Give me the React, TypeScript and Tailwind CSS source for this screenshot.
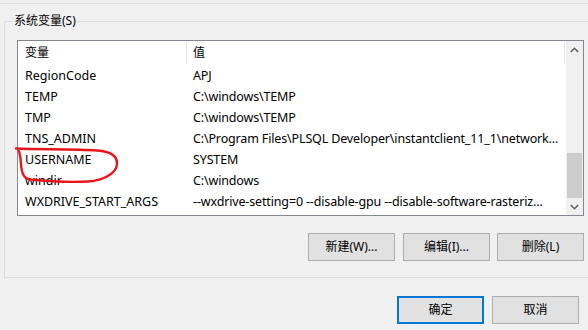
import React from "react";

interface EnvVar {
  name: string;
  value: string;
}

const rows: EnvVar[] = [
  { name: "RegionCode", value: "APJ" },
  { name: "TEMP", value: "C:\\windows\\TEMP" },
  { name: "TMP", value: "C:\\windows\\TEMP" },
  { name: "TNS_ADMIN", value: "C:\\Program Files\\PLSQL Developer\\instantclient_11_1\\network..." },
  { name: "USERNAME", value: "SYSTEM" },
  { name: "windir", value: "C:\\windows" },
  { name: "WXDRIVE_START_ARGS", value: "--wxdrive-setting=0 --disable-gpu --disable-software-rasteriz..." },
];

const Chevron = ({ down }: { down?: boolean }) => (
  <svg width="9" height="6" viewBox="0 0 9 6" className={down ? "rotate-180" : ""}>
    <path d="M0.8 5 L4.5 1.3 L8.2 5" fill="none" stroke="#606060" strokeWidth="1.6" />
  </svg>
);

const WinButton = ({ label, primary, className = "" }: { label: string; primary?: boolean; className?: string }) => (
  <button
    className={
      "w-[87px] h-[28px] bg-[#e1e1e1] flex items-center justify-center leading-none " +
      (primary ? "border-2 border-[#0078d7] " : "border border-[#adadad] ") +
      className
    }
  >
    {label}
  </button>
);

export default function App() {
  return (
    <div className="relative w-[588px] h-[330px] overflow-hidden bg-[#f0f0f0] text-[12px] text-black font-['Noto_Sans','Noto_Sans_CJK_SC',sans-serif]">
      <div className="h-[4px] border-b border-[#dcdcdc]" />

      {/* system variables group */}
      <div className="relative mt-[17px] ml-[4px] w-[600px] border border-[#dcdcdc] pt-[18px] pl-[12px] pb-[16px]">
        <span className="absolute left-[8px] top-[-9px] px-[1px] bg-[#f0f0f0] leading-[16px]">系统变量(S)</span>

        <div className="w-[567px] h-[176px] border border-[#828790] bg-white flex overflow-hidden">
          <div className="w-[548px] flex flex-col">
            <div className="h-[24px] flex shrink-0">
              <div className="w-[169px] pl-[7px] border-r border-[#e5e5e5] flex items-center my-[1px]">变量</div>
              <div className="w-[378px] pl-[6px] border-r border-[#e5e5e5] flex items-center my-[1px]">值</div>
            </div>
            {rows.map((r) => (
              <div key={r.name} className="h-[21px] flex shrink-0 leading-[22px] text-[12.5px] whitespace-nowrap">
                <div className="w-[169px] pl-[7px] overflow-hidden">{r.name}</div>
                <div className="w-[379px] pl-[6px] overflow-hidden tracking-[-0.15px]">{r.value}</div>
              </div>
            ))}
          </div>

          <div className="w-[17px] bg-[#f0f0f0] flex flex-col">
            <div className="h-[17px] flex items-center justify-center">
              <Chevron />
            </div>
            <div className="h-[95px]" />
            <div className="h-[45px] mx-[1px] bg-[#cdcdcd]" />
            <div className="h-[17px] flex items-center justify-center">
              <Chevron down />
            </div>
          </div>
        </div>

        <div className="w-[567px] mt-[17px] flex justify-end">
          <WinButton label="新建(W)..." className="mr-[8px]" />
          <WinButton label="编辑(I)..." className="mr-[7px]" />
          <WinButton label="删除(L)" />
        </div>
      </div>

      <div className="mt-[18px] pr-[9px] flex justify-end gap-[8px]">
        <WinButton label="确定" primary />
        <WinButton label="取消" />
      </div>

      {/* red hand-drawn mark */}
      <svg className="absolute left-0 top-0 pointer-events-none" width="588" height="330">
        <path
          d="M16 148.5 C40 149.5 75 149 97 150.5 C111 151.5 117.5 156 117 164 C116.5 173 104 180.5 88 181.5 C70 182.5 45 181 30 179.5 C23 178 21.5 172 21 164 C20.5 158 20 153 18.5 150"
          fill="none"
          stroke="#e8151b"
          strokeWidth="2.4"
          strokeLinecap="round"
        />
      </svg>
    </div>
  );
}
